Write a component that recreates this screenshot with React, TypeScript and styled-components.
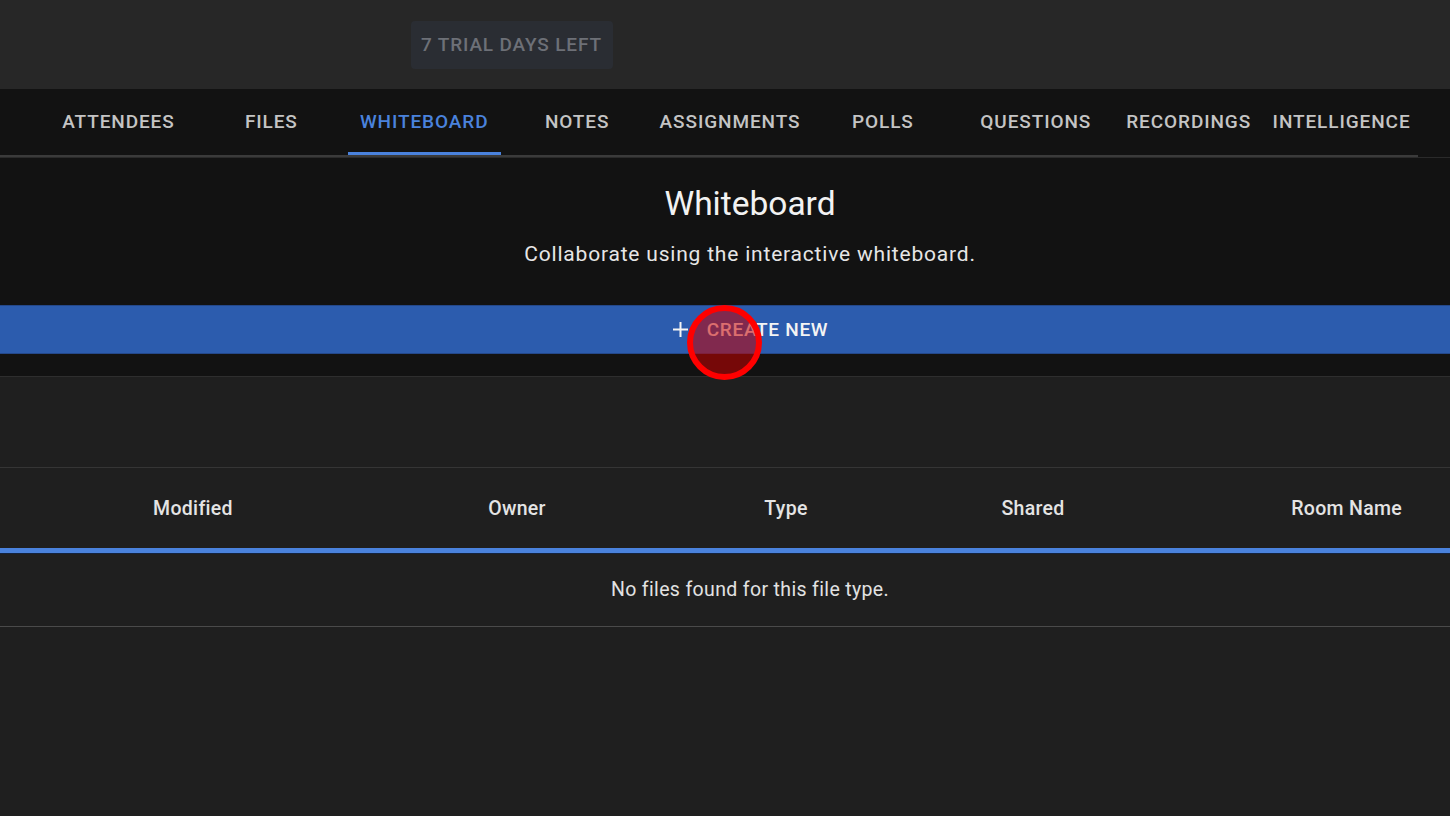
import styled, { createGlobalStyle } from 'styled-components';

const GlobalStyle = createGlobalStyle`
  html, body {
    margin: 0;
    padding: 0;
    background: #1f1f1f;
    font-family: Roboto, "Liberation Sans", Arial, sans-serif;
    overflow: hidden;
  }
  * {
    box-sizing: border-box;
  }
`;

// the app is laid out a little wider than the window, so it is centred at 750
const Page = styled.div`
  position: relative;
  width: 1500px;
  min-height: 816px;
  background: #1f1f1f;
`;

const TopBar = styled.header`
  height: 89px;
  background: #272727;
  display: flex;
  align-items: center;
  padding-left: 411px;
`;

const TrialBadge = styled.div`
  height: 48px;
  padding: 0 11px 0 10px;
  display: flex;
  align-items: center;
  background: #2a2d33;
  border-radius: 4px;
  color: #6d7077;
  font-size: 19px;
  font-weight: 500;
  letter-spacing: 0.85px;
`;

const TabBar = styled.nav`
  height: 69px;
  background: #121212;
  border-bottom: 1px solid #2a2a2a;
`;

const TabRow = styled.div`
  width: 1418px;
  height: 68px;
  display: flex;
  padding-left: 42px;
  border-bottom: 2px solid #3a3a3a;
`;

interface TabProps {
  $active?: boolean;
}

const Tab = styled.div<TabProps>`
  position: relative;
  width: 153px;
  display: flex;
  align-items: center;
  justify-content: center;
  padding-bottom: 1px;
  font-size: 19px;
  font-weight: 500;
  letter-spacing: 0.9px;
  white-space: nowrap;
  color: ${p => (p.$active ? '#4a82dc' : '#c4c4c4')};

  &::after {
    content: '';
    display: ${p => (p.$active ? 'block' : 'none')};
    position: absolute;
    left: 0;
    right: 0;
    bottom: 0;
    height: 3px;
    background: #4a82dc;
  }
`;

const Intro = styled.section`
  height: 147px;
  background: #121212;
  display: flex;
  flex-direction: column;
  align-items: center;
  padding-top: 25px;
`;

const Title = styled.h1`
  margin: 0;
  font-size: 33.5px;
  font-weight: 400;
  line-height: 42px;
  color: #f2f2f2;
`;

const Subtitle = styled.p`
  margin: 14px 0 0;
  font-size: 21px;
  font-weight: 400;
  line-height: 30px;
  letter-spacing: 0.8px;
  color: #e6e6e6;
`;

const CreateButton = styled.button`
  width: 100%;
  height: 49px;
  border: none;
  border-top: 1px solid #24488a;
  border-bottom: 1px solid #24488a;
  background: #2c5cae;
  color: #f4f4f4;
  font-family: inherit;
  font-size: 19px;
  font-weight: 500;
  letter-spacing: 0.7px;
  display: flex;
  align-items: center;
  justify-content: center;
  gap: 18px;
  cursor: pointer;
`;

const Spacer = styled.div`
  height: 23px;
  background: #121212;
  border-bottom: 1px solid #2e2e2e;
`;

const Toolbar = styled.div`
  height: 91px;
  background: #1f1f1f;
  border-bottom: 1px solid #353535;
`;

const TableGrid = styled.div`
  display: grid;
  grid-template-columns: 386px 262px 276px 218px 1fr;
`;

const HeaderRow = styled(TableGrid)`
  height: 85px;
  align-items: center;
  padding-top: 1px;
  border-bottom: 5px solid #4a82dc;
  box-shadow: 0 1px 0 #13233e;
`;

interface HeadCellProps {
  $right?: boolean;
}

const HeadCell = styled.div<HeadCellProps>`
  text-align: ${p => (p.$right ? 'right' : 'center')};
  padding-right: ${p => (p.$right ? '98px' : '0')};
  font-size: 19.5px;
  font-weight: 500;
  letter-spacing: 0.3px;
  color: #e4e4e4;
`;

const EmptyRow = styled.div`
  height: 74px;
  display: flex;
  align-items: center;
  justify-content: center;
  border-bottom: 1px solid #4a4a4a;
  font-size: 19.5px;
  color: #e2e2e2;
  letter-spacing: 0.35px;
`;

const ClickMarker = styled.div`
  position: absolute;
  left: 687px;
  top: 305px;
  width: 75px;
  height: 75px;
  border-radius: 50%;
  border: 6px solid #ff0000;
  background: rgba(200, 0, 0, 0.55);
  pointer-events: none;
`;

const PlusIcon = () => (
  <svg width="17" height="17" viewBox="0 0 17 17" fill="none">
    <path d="M8.5 1v15M1 8.5h15" stroke="#f4f4f4" strokeWidth="2" />
  </svg>
);

const tabs = [
  'ATTENDEES',
  'FILES',
  'WHITEBOARD',
  'NOTES',
  'ASSIGNMENTS',
  'POLLS',
  'QUESTIONS',
  'RECORDINGS',
  'INTELLIGENCE',
];

const App = () => {
  return (
    <Page>
      <GlobalStyle />
      <TopBar>
        <TrialBadge>7 TRIAL DAYS LEFT</TrialBadge>
      </TopBar>

      <TabBar>
        <TabRow>
          {tabs.map(t => (
            <Tab key={t} $active={t === 'WHITEBOARD'}>
              {t}
            </Tab>
          ))}
        </TabRow>
      </TabBar>

      <Intro>
        <Title>Whiteboard</Title>
        <Subtitle>Collaborate using the interactive whiteboard.</Subtitle>
      </Intro>

      <CreateButton>
        <PlusIcon />
        CREATE NEW
      </CreateButton>
      <Spacer />
      <Toolbar />

      <HeaderRow>
        <HeadCell>Modified</HeadCell>
        <HeadCell>Owner</HeadCell>
        <HeadCell>Type</HeadCell>
        <HeadCell>Shared</HeadCell>
        <HeadCell $right>Room Name</HeadCell>
      </HeaderRow>
      <EmptyRow>No files found for this file type.</EmptyRow>

      {/* click indicator from the recording */}
      <ClickMarker />
    </Page>
  );
};

export default App;
